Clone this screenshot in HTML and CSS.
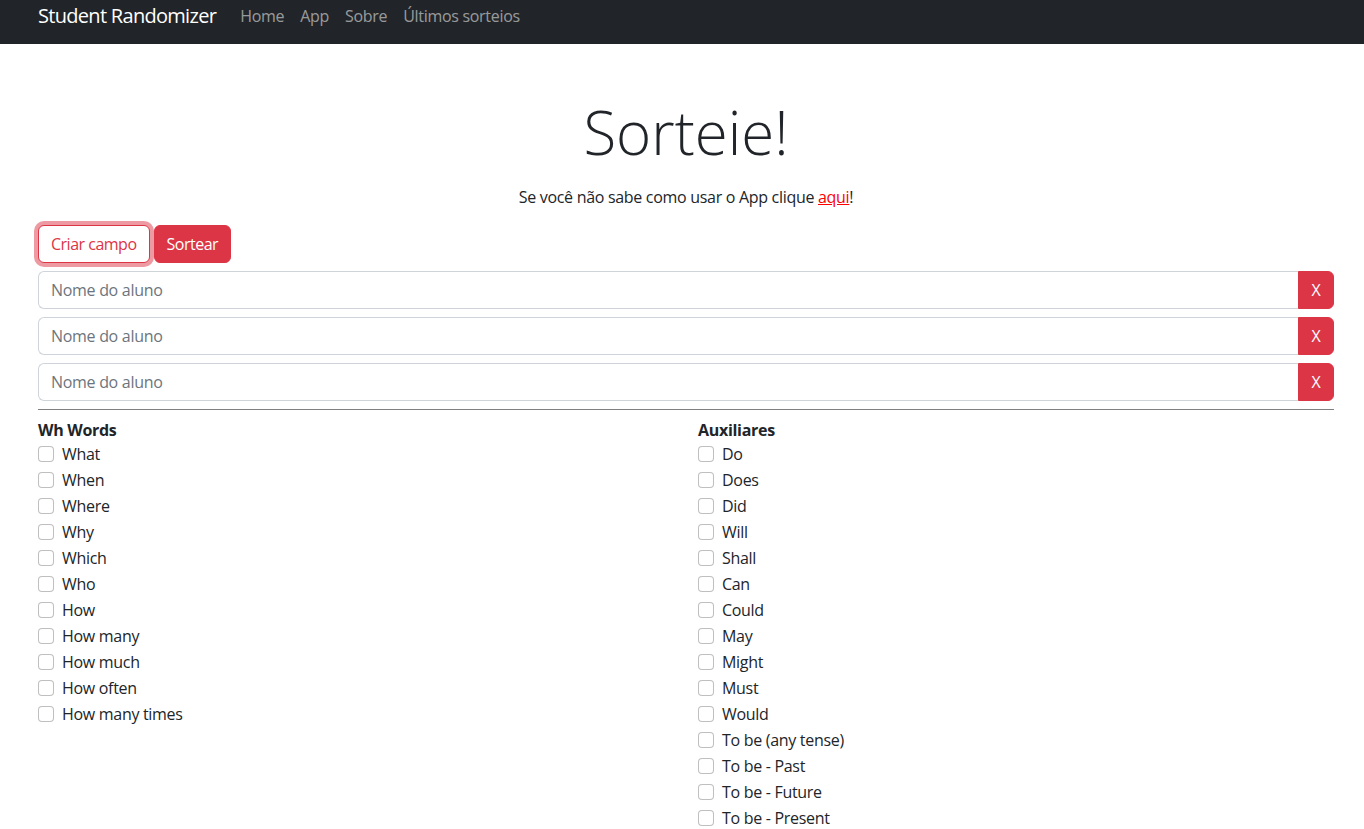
FILE: index.html
```html
<!DOCTYPE html>
<html lang="pt-BR">
<head>
<meta charset="utf-8">
<title>Student Randomizer</title>
<link rel="stylesheet" href="styles.css">
</head>
<body>
<nav class="navbar">
  <div class="nav-inner">
    <a class="brand" href="#">Student Randomizer</a>
    <ul class="nav-links">
      <li><a href="#">Home</a></li>
      <li><a href="#">App</a></li>
      <li><a href="#">Sobre</a></li>
      <li><a href="#">Últimos sorteios</a></li>
    </ul>
  </div>
</nav>
<main class="container">
  <h1 class="title">Sorteie!</h1>
  <p class="lead-text">Se você não sabe como usar o App clique <a href="#" class="red-link">aqui</a>!</p>
  <div class="actions">
    <button class="btn btn-outline focused">Criar campo</button>
    <button class="btn btn-danger">Sortear</button>
  </div>
  <div class="fields">
    <div class="input-group"><input type="text" placeholder="Nome do aluno"><button class="btn-x">X</button></div>
    <div class="input-group"><input type="text" placeholder="Nome do aluno"><button class="btn-x">X</button></div>
    <div class="input-group"><input type="text" placeholder="Nome do aluno"><button class="btn-x">X</button></div>
  </div>
  <hr class="divider">
  <div class="row">
    <div class="col">
      <h6 class="group-title">Wh Words</h6>
      <label class="check"><input type="checkbox"><span>What</span></label>
      <label class="check"><input type="checkbox"><span>When</span></label>
      <label class="check"><input type="checkbox"><span>Where</span></label>
      <label class="check"><input type="checkbox"><span>Why</span></label>
      <label class="check"><input type="checkbox"><span>Which</span></label>
      <label class="check"><input type="checkbox"><span>Who</span></label>
      <label class="check"><input type="checkbox"><span>How</span></label>
      <label class="check"><input type="checkbox"><span>How many</span></label>
      <label class="check"><input type="checkbox"><span>How much</span></label>
      <label class="check"><input type="checkbox"><span>How often</span></label>
      <label class="check"><input type="checkbox"><span>How many times</span></label>
    </div>
    <div class="col">
      <h6 class="group-title">Auxiliares</h6>
      <label class="check"><input type="checkbox"><span>Do</span></label>
      <label class="check"><input type="checkbox"><span>Does</span></label>
      <label class="check"><input type="checkbox"><span>Did</span></label>
      <label class="check"><input type="checkbox"><span>Will</span></label>
      <label class="check"><input type="checkbox"><span>Shall</span></label>
      <label class="check"><input type="checkbox"><span>Can</span></label>
      <label class="check"><input type="checkbox"><span>Could</span></label>
      <label class="check"><input type="checkbox"><span>May</span></label>
      <label class="check"><input type="checkbox"><span>Might</span></label>
      <label class="check"><input type="checkbox"><span>Must</span></label>
      <label class="check"><input type="checkbox"><span>Would</span></label>
      <label class="check"><input type="checkbox"><span>To be (any tense)</span></label>
      <label class="check"><input type="checkbox"><span>To be - Past</span></label>
      <label class="check"><input type="checkbox"><span>To be - Future</span></label>
      <label class="check"><input type="checkbox"><span>To be - Present</span></label>
    </div>
  </div>
</main>
</body>
</html>
```
FILE: styles.css
```css
* { box-sizing: border-box; }
html, body { margin: 0; padding: 0; }
body {
  font-family: "Open Sans", "Noto Sans", sans-serif;
  font-size: 16px;
  line-height: 1.5;
  color: #212529;
  background: #fff;
  letter-spacing: -0.3px;
}
.navbar {
  background: #212529;
  height: 44px;
}
.nav-inner {
  display: flex;
  align-items: center;
  height: 100%;
  padding: 0 30px 0 38px;
}
.brand {
  color: #fff;
  text-decoration: none;
  font-size: 20px;
  line-height: 30px;
  letter-spacing: -0.7px;
  margin-right: 16px;
  margin-top: -12px;
}
.nav-links {
  list-style: none;
  display: flex;
  margin: 0;
  padding: 0;
  margin-top: -12px;
}
.nav-links a {
  display: block;
  color: rgba(255,255,255,.55);
  text-decoration: none;
  padding: 0 8px;
  line-height: 24px;
}
.container {
  padding: 0 30px 0 38px;
}
.title {
  font-size: 60px;
  font-weight: 300;
  line-height: 86px;
  text-align: center;
  margin: 45px 0 10px;
  letter-spacing: 0;
}
.lead-text {
  text-align: center;
  margin: 0 0 16px;
}
.red-link { color: #f00; }
.actions {
  display: flex;
  gap: 4px;
  margin-bottom: 8px;
}
.btn {
  font-family: inherit;
  font-size: 16px;
  line-height: 24px;
  padding: 6px 12px;
  border-radius: 6px;
  border: 1px solid #dc3545;
  letter-spacing: -0.5px;
  cursor: pointer;
}
.btn-outline { background: #fff; color: #dc3545; }
.btn-outline.focused { box-shadow: 0 0 0 4px rgba(220,53,69,.5); }
.btn-danger { background: #dc3545; color: #fff; }
.fields {
  display: flex;
  flex-direction: column;
  gap: 8px;
}
.input-group {
  display: flex;
}
.input-group input {
  flex: 1;
  height: 38px;
  border: 1px solid #ced4da;
  border-right: none;
  border-radius: 6px 0 0 6px;
  padding: 6px 12px;
  font-family: inherit;
  font-size: 16px;
  letter-spacing: inherit;
  color: #212529;
}
.input-group input::placeholder { color: #6c757d; }
.btn-x {
  width: 36px;
  height: 38px;
  border: 1px solid #dc3545;
  background: #dc3545;
  color: #fff;
  border-radius: 0 6px 6px 0;
  font-family: inherit;
  font-size: 16px;
  padding: 0;
}
.divider {
  border: 0;
  border-top: 1px solid #808080;
  margin: 8px 0;
}
.row {
  display: flex;
  margin: 0 -12px;
}
.col {
  flex: 1 1 0;
  padding: 0 12px;
}
.group-title {
  font-size: 16px;
  font-weight: 700;
  margin: 0;
  line-height: 24px;
}
.check {
  display: flex;
  align-items: center;
  min-height: 24px;
  margin-bottom: 2px;
}
.check input {
  appearance: none;
  -webkit-appearance: none;
  width: 16px;
  height: 16px;
  margin: 0 8px 0 0;
  border: 1px solid rgba(0,0,0,.25);
  border-radius: 4px;
  background: #fff;
  flex: none;
}
```
